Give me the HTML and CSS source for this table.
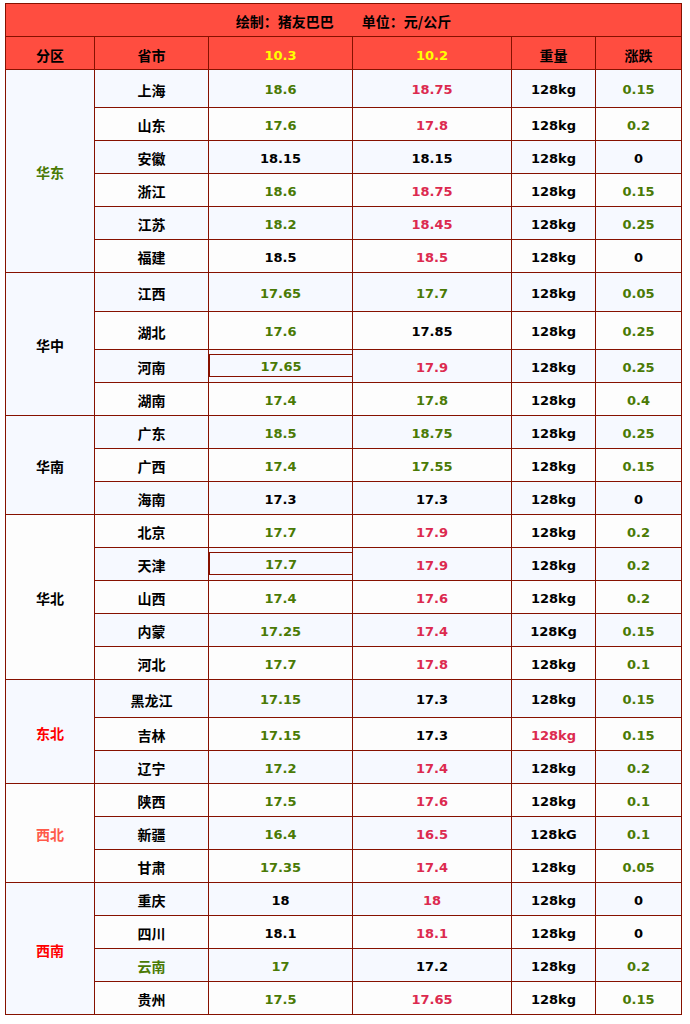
FILE: index.html
```html
<!DOCTYPE html>
<html lang="zh-CN">
<head>
<meta charset="utf-8">
<title>猪价行情</title>
<link rel="stylesheet" href="styles.css">
</head>
<body>
<div class="sheet">
  <div class="title">绘制：猪友巴巴&emsp;&emsp;单位：元/公斤</div>
  <div class="row head">
    <div class="c zh">分区</div>
    <div class="c zh">省市</div>
    <div class="c date">10.3</div>
    <div class="c date">10.2</div>
    <div class="c zh">重量</div>
    <div class="c zh">涨跌</div>
  </div>

  <div class="row odd tall">
    <div class="c zh region span6 g">华东</div>
    <div class="c zh">上海</div><div class="c g">18.6</div><div class="c r">18.75</div><div class="c">128kg</div><div class="c g">0.15</div>
  </div>
  <div class="row even">
    <div class="c zh">山东</div><div class="c g">17.6</div><div class="c r">17.8</div><div class="c">128kg</div><div class="c g">0.2</div>
  </div>
  <div class="row odd">
    <div class="c zh">安徽</div><div class="c">18.15</div><div class="c">18.15</div><div class="c">128kg</div><div class="c">0</div>
  </div>
  <div class="row even">
    <div class="c zh">浙江</div><div class="c g">18.6</div><div class="c r">18.75</div><div class="c">128kg</div><div class="c g">0.15</div>
  </div>
  <div class="row odd">
    <div class="c zh">江苏</div><div class="c g">18.2</div><div class="c r">18.45</div><div class="c">128kg</div><div class="c g">0.25</div>
  </div>
  <div class="row even">
    <div class="c zh">福建</div><div class="c">18.5</div><div class="c r">18.5</div><div class="c">128kg</div><div class="c">0</div>
  </div>

  <div class="row odd taller">
    <div class="c zh region span4">华中</div>
    <div class="c zh">江西</div><div class="c g">17.65</div><div class="c g">17.7</div><div class="c">128kg</div><div class="c g">0.05</div>
  </div>
  <div class="row even tall">
    <div class="c zh">湖北</div><div class="c g">17.6</div><div class="c">17.85</div><div class="c">128kg</div><div class="c g">0.25</div>
  </div>
  <div class="row odd">
    <div class="c zh">河南</div><div class="c g"><span class="box">17.65</span></div><div class="c r">17.9</div><div class="c">128kg</div><div class="c g">0.25</div>
  </div>
  <div class="row even">
    <div class="c zh">湖南</div><div class="c g">17.4</div><div class="c g">17.8</div><div class="c">128kg</div><div class="c g">0.4</div>
  </div>

  <div class="row odd">
    <div class="c zh region span3">华南</div>
    <div class="c zh">广东</div><div class="c g">18.5</div><div class="c g">18.75</div><div class="c">128kg</div><div class="c g">0.25</div>
  </div>
  <div class="row even">
    <div class="c zh">广西</div><div class="c g">17.4</div><div class="c g">17.55</div><div class="c">128kg</div><div class="c g">0.15</div>
  </div>
  <div class="row odd">
    <div class="c zh">海南</div><div class="c">17.3</div><div class="c">17.3</div><div class="c">128kg</div><div class="c">0</div>
  </div>

  <div class="row even">
    <div class="c zh region span5">华北</div>
    <div class="c zh">北京</div><div class="c g">17.7</div><div class="c r">17.9</div><div class="c">128kg</div><div class="c g">0.2</div>
  </div>
  <div class="row odd">
    <div class="c zh">天津</div><div class="c g"><span class="box">17.7</span></div><div class="c r">17.9</div><div class="c">128kg</div><div class="c g">0.2</div>
  </div>
  <div class="row even">
    <div class="c zh">山西</div><div class="c g">17.4</div><div class="c r">17.6</div><div class="c">128kg</div><div class="c g">0.2</div>
  </div>
  <div class="row odd">
    <div class="c zh">内蒙</div><div class="c g">17.25</div><div class="c r">17.4</div><div class="c">128Kg</div><div class="c g">0.15</div>
  </div>
  <div class="row even">
    <div class="c zh">河北</div><div class="c g">17.7</div><div class="c r">17.8</div><div class="c">128kg</div><div class="c g">0.1</div>
  </div>

  <div class="row odd tall">
    <div class="c zh region span3 red">东北</div>
    <div class="c zh">黑龙江</div><div class="c g">17.15</div><div class="c">17.3</div><div class="c">128kg</div><div class="c g">0.15</div>
  </div>
  <div class="row even">
    <div class="c zh">吉林</div><div class="c g">17.15</div><div class="c">17.3</div><div class="c r">128kg</div><div class="c g">0.15</div>
  </div>
  <div class="row odd">
    <div class="c zh">辽宁</div><div class="c g">17.2</div><div class="c r">17.4</div><div class="c">128kg</div><div class="c g">0.2</div>
  </div>

  <div class="row even">
    <div class="c zh region span3 coral">西北</div>
    <div class="c zh">陕西</div><div class="c g">17.5</div><div class="c r">17.6</div><div class="c">128kg</div><div class="c g">0.1</div>
  </div>
  <div class="row odd">
    <div class="c zh">新疆</div><div class="c g">16.4</div><div class="c r">16.5</div><div class="c">128kG</div><div class="c g">0.1</div>
  </div>
  <div class="row even">
    <div class="c zh">甘肃</div><div class="c g">17.35</div><div class="c r">17.4</div><div class="c">128kg</div><div class="c g">0.05</div>
  </div>

  <div class="row odd">
    <div class="c zh region span4 red">西南</div>
    <div class="c zh">重庆</div><div class="c">18</div><div class="c r">18</div><div class="c">128kg</div><div class="c">0</div>
  </div>
  <div class="row even">
    <div class="c zh">四川</div><div class="c">18.1</div><div class="c r">18.1</div><div class="c">128kg</div><div class="c">0</div>
  </div>
  <div class="row odd">
    <div class="c zh g">云南</div><div class="c g">17</div><div class="c">17.2</div><div class="c">128kg</div><div class="c g">0.2</div>
  </div>
  <div class="row even">
    <div class="c zh">贵州</div><div class="c g">17.5</div><div class="c r">17.65</div><div class="c">128kg</div><div class="c g">0.15</div>
  </div>
</div>
</body>
</html>
```

FILE: styles.css
```css
html, body {
  margin: 0;
  background: #ffffff;
}

body {
  padding: 3px 5px;
}

.sheet {
  display: grid;
  width: max-content;
  grid-template-columns: 88px 113px 143px 158px 83px 85px;
  grid-auto-rows: minmax(32px, auto);
  gap: 1px;
  padding: 1px;
  background: #861100;
  font-family: "DejaVu Sans", "Noto Sans CJK SC", sans-serif;
  font-weight: bold;
  font-size: 13px;
  color: #000;
}

.title {
  grid-column: 1 / -1;
  background: #ff4d40;
  display: flex;
  align-items: center;
  justify-content: center;
  padding-top: 2px;
  font-family: "Noto Sans CJK SC", sans-serif;
  font-size: 14px;
}

.row {
  display: contents;
}

.c {
  box-sizing: border-box;
  display: flex;
  align-items: center;
  justify-content: center;
  padding-top: 2px;
  min-width: 0;
}

.zh {
  font-family: "Noto Sans CJK SC", sans-serif;
  font-size: 14px;
}

.head > .c {
  background: #ff4d40;
  padding-top: 4px;
}

.head > .date {
  color: #ffff00;
}

.odd > .c {
  background: #f6f9ff;
}

.even > .c {
  background: #fdfdfd;
}

.tall > .c:not(.region) {
  height: 37px;
}

.taller > .c:not(.region) {
  height: 38px;
}

.region {
  grid-column: 1;
}

.span3 { grid-row: span 3; }
.span4 { grid-row: span 4; }
.span5 { grid-row: span 5; }
.span6 { grid-row: span 6; }

.g { color: #4a7a05; }
.r { color: #dc2a4f; }
.red { color: #ff0000; }
.coral { color: #ff5a4a; }

.box {
  box-sizing: border-box;
  display: flex;
  align-items: center;
  justify-content: center;
  align-self: flex-start;
  height: 23px;
  margin: 2px -1px 0 0;
  width: calc(100% + 1px);
  border: 1px solid #861100;
  padding-top: 1px;
}
```
